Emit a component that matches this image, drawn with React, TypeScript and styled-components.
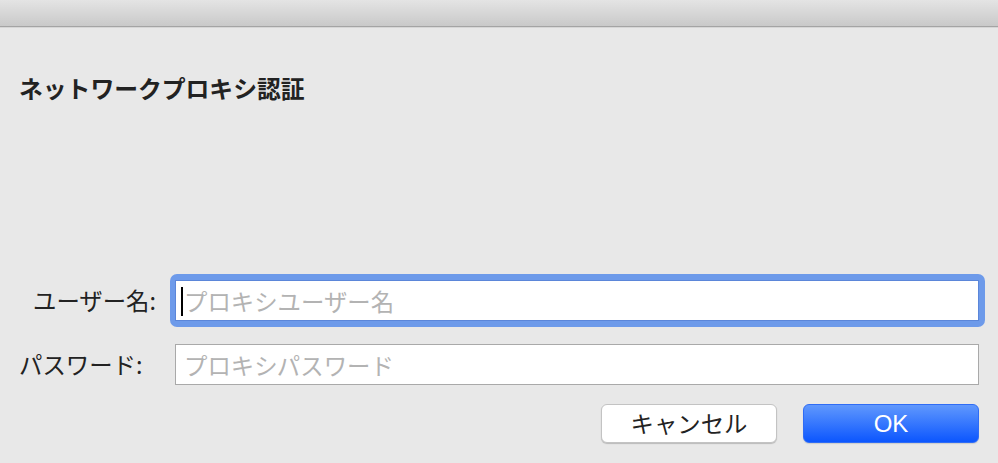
import React from "react";
import styled, { createGlobalStyle } from "styled-components";

const Global = createGlobalStyle`
  html, body { margin: 0; padding: 0; }
  body {
    width: 998px;
    height: 463px;
    overflow: hidden;
    background: #e8e8e8;
    font-family: "Noto Sans CJK JP", "Liberation Sans", sans-serif;
    color: #222;
  }
`;

const Window = styled.div`
  width: 998px;
  height: 463px;
  display: flex;
  flex-direction: column;
  background: #e8e8e8;
`;

const TitleBar = styled.div`
  height: 26px;
  flex: none;
  background: linear-gradient(#e4e4e4, #c9c9c9);
  border-bottom: 1px solid #a4a4a4;
  box-shadow: 0 1px 0 #d6d6d6;
`;

const Content = styled.div`
  display: flex;
  flex-direction: column;
  padding: 0 19px;
`;

const Heading = styled.h1`
  margin: 45px 0 0;
  font-size: 23.8px;
  line-height: 32px;
  font-weight: 700;
  color: #222;
`;

const Form = styled.div`
  display: grid;
  grid-template-columns: 151px 1fr;
  row-gap: 17px;
  margin-top: 170px;
  align-items: center;
`;

const Label = styled.label<{ $align: "start" | "end" }>`
  font-size: 23.4px;
  line-height: 30px;
  color: #222;
  justify-self: ${(p) => p.$align};
  padding-right: ${(p) => (p.$align === "end" ? "14px" : "0")};
  transform: translateY(-1px);
`;

const FocusRing = styled.div`
  margin-right: -6px;
  padding: 6px 6px 6px 5px;
  border-radius: 7px;
  background: #6d9aea;
`;

const Field = styled.div<{ $focused?: boolean }>`
  height: 41px;
  box-sizing: border-box;
  background: #fff;
  border: 1px solid ${(p) => (p.$focused ? "#5b86d9" : "#a9a9a9")};
  margin-left: ${(p) => (p.$focused ? "0" : "5px")};
  display: flex;
  align-items: center;
  padding-left: 8px;
  position: relative;
`;

const Placeholder = styled.span`
  font-size: 23.4px;
  line-height: 30px;
  color: #b3b3b3;
`;

const Caret = styled.span`
  position: absolute;
  left: 5px;
  top: 6px;
  width: 2px;
  height: 29px;
  background: #000;
`;

const Buttons = styled.div`
  display: flex;
  justify-content: flex-end;
  gap: 26px;
  margin-top: 19px;
`;

const Button = styled.button<{ $primary?: boolean }>`
  width: 176px;
  height: 39px;
  box-sizing: border-box;
  border-radius: 6px;
  font-family: ${(p) =>
    p.$primary
      ? '"Liberation Sans", Arial, sans-serif'
      : '"Noto Sans CJK JP", sans-serif'};
  font-size: ${(p) => (p.$primary ? "24px" : "23.4px")};
  line-height: 1;
  padding: 0;
  display: flex;
  align-items: center;
  justify-content: center;
  color: ${(p) => (p.$primary ? "#fff" : "#222")};
  background: ${(p) =>
    p.$primary ? "linear-gradient(#6098fd, #0c56fe)" : "#ffffff"};
  border: 1px solid ${(p) => (p.$primary ? "#2f6cf5" : "#c3c3c3")};
  box-shadow: ${(p) =>
    p.$primary ? "0 1px 1px rgba(0,0,0,0.12)" : "0 1px 1px rgba(0,0,0,0.2)"};
`;

export default function App() {
  return (
    <Window>
      <Global />
      <TitleBar />
      <Content>
        <Heading>ネットワークプロキシ認証</Heading>
        <Form>
          <Label $align="end">ユーザー名:</Label>
          <FocusRing>
            <Field $focused>
              <Caret />
              <Placeholder>プロキシユーザー名</Placeholder>
            </Field>
          </FocusRing>
          <Label $align="start">パスワード:</Label>
          <Field>
            <Placeholder>プロキシパスワード</Placeholder>
          </Field>
        </Form>
        <Buttons>
          <Button>キャンセル</Button>
          <Button $primary>OK</Button>
        </Buttons>
      </Content>
    </Window>
  );
}
